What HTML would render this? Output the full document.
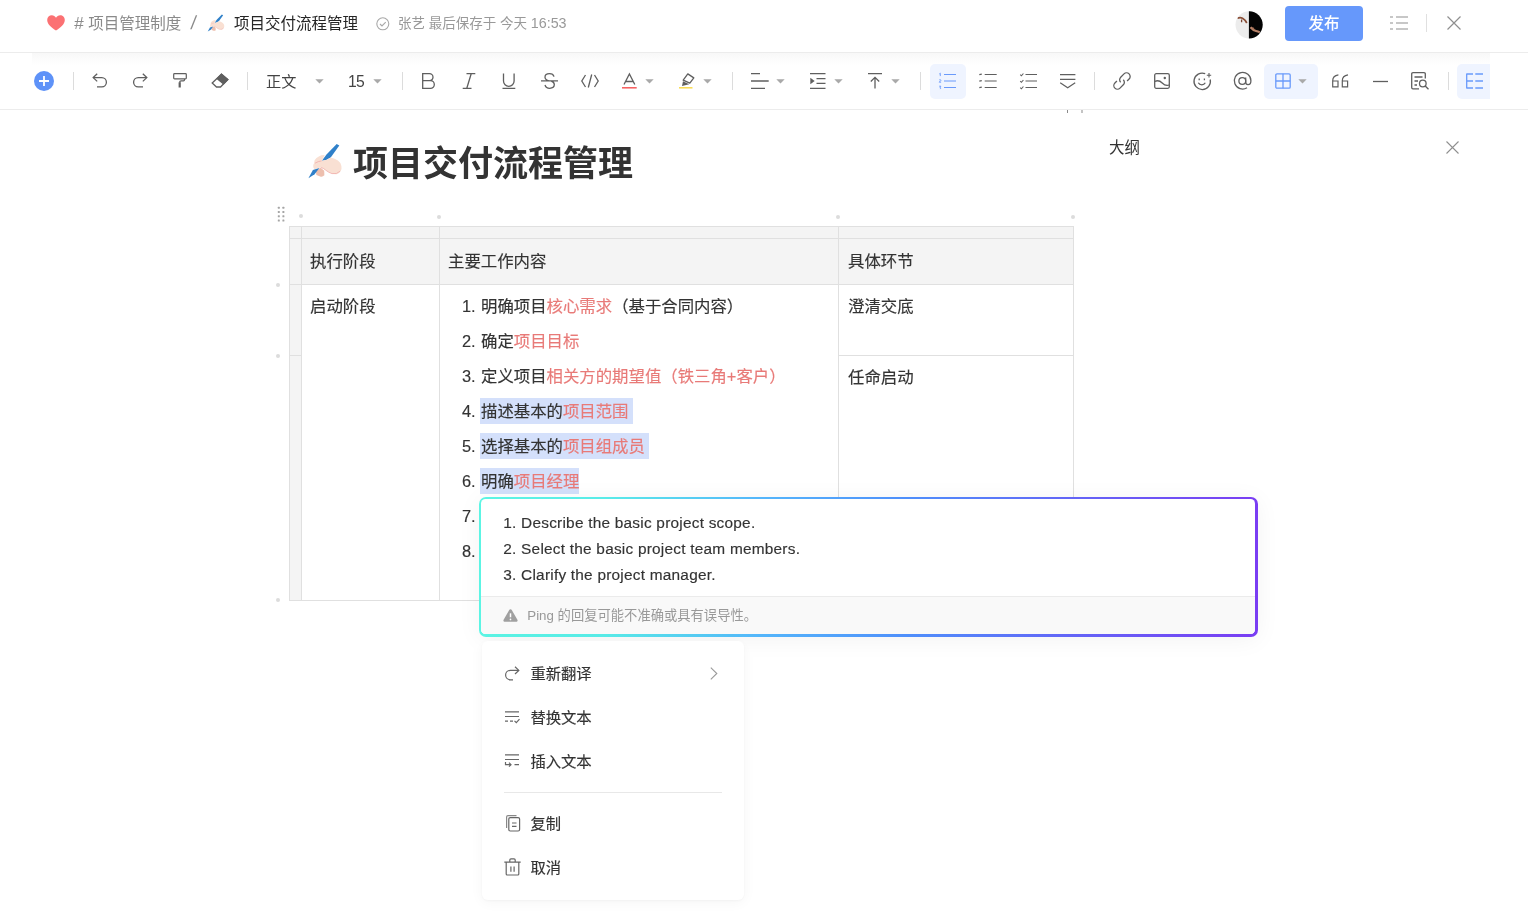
<!DOCTYPE html>
<html lang="zh-CN">
<head>
<meta charset="utf-8">
<title>项目交付流程管理</title>
<style>
*{box-sizing:border-box;margin:0;padding:0}
html,body{width:1528px;height:924px;overflow:hidden;background:#fff}
body{position:relative;font-family:"Liberation Sans","Noto Sans CJK SC",sans-serif;color:#333;-webkit-font-smoothing:antialiased}
.abs{position:absolute}
.t{position:absolute;white-space:nowrap;line-height:1}
svg{position:absolute;overflow:visible}
/* header */
#topline{left:0;top:52px;width:1528px;height:1px;background:#ececec}
#tbshadow{left:32px;top:53px;width:1458px;height:12px;background:linear-gradient(#f8f8f8,#fff)}
#botline{left:0;top:109px;width:1528px;height:1px;background:#ececec}
.sep{position:absolute;width:1px;background:#dcdcdc}
.hl{position:absolute;background:#eff4ff;border-radius:5px}
/* table */
.cellbg{position:absolute;background:#f4f4f4}
.ln{position:absolute;background:#e0e0e0}
.li{-webkit-text-stroke-width:.15px;position:absolute;white-space:nowrap;font-size:16.4px;line-height:24px;height:24px;color:#333}
.red{color:#e87a78}
.sel{background:#d4e0fb;padding:4px 0 4px 0;margin-left:-1px;padding-left:1px}
.dot{position:absolute;width:4px;height:4px;border-radius:50%;background:#dcdcdc}
/* popup */
#pop{left:478.5px;top:496.5px;width:779px;height:140.5px;border-radius:7px;background:linear-gradient(90deg,#5cf5e4 0%,#59ece8 16%,#54b6fb 36%,#4f8ffb 55%,#6365f7 76%,#7a3df3 100%);box-shadow:0 3px 24px rgba(0,0,0,.05)}
#popin{left:2.8px;top:2.8px;right:2.8px;bottom:2.8px;border-radius:4.5px;background:#fff;overflow:hidden}
#popfoot{left:0;right:0;top:96.7px;bottom:0;background:#f9f9f9;border-top:1px solid #ebebeb}
.en{-webkit-text-stroke-width:.15px;position:absolute;font-size:15.4px;letter-spacing:.23px;color:#333;white-space:nowrap;line-height:1}
/* menu */
#menu{left:482px;top:641px;width:262px;height:259px;border-radius:6px;background:#fff;box-shadow:0 2px 14px rgba(0,0,0,.045),0 1px 3px rgba(0,0,0,.04)}
.mi{-webkit-text-stroke-width:.15px;position:absolute;font-size:15.3px;color:#333;white-space:nowrap;line-height:1}
</style>
</head>
<body>
<div id="wrap" style="position:absolute;left:0;top:0;width:1528px;height:924px;will-change:transform">
<!-- TOP BAR -->
<div id="top">
<svg style="left:47px;top:15px" width="18" height="16" viewBox="0 0 18 16"><path d="M9 15.6C4.5 12.6 0.2 9.2 0.2 5 0.2 2.2 2.3 0.3 4.8 0.3 6.6 0.3 8.1 1.2 9 2.8 9.9 1.2 11.4 0.3 13.2 0.3 15.7 0.3 17.8 2.2 17.8 5 17.8 9.2 13.5 12.6 9 15.6Z" fill="#fb7173"/></svg>
<div class="t" style="left:74.2px;top:16px;font-size:15.5px;color:#8a8a8a"><span style="font-size:17px;line-height:0;letter-spacing:.3px">#</span> 项目管理制度</div>
<div class="t" style="left:191px;top:13px;font-size:19px;color:#8a8a8a;transform:skewX(-8deg) scaleX(.95)">/</div>
<svg style="left:207px;top:14px" width="18" height="18" viewBox="0 0 36 36"><path d="M8.800 27.700L13.600 24.700 17.200 27.700 17.400 32.300Q15.500 34.300 13.200 33.500L9.400 31.900Z" fill="#edbfae"/><path d="M29.700 0.900L32.300 2.400 23.700 14.600Q20.500 17.200 14.800 17.800L19.500 11.600Z" fill="#2f80c9"/><path d="M7.600 17.200Q9.200 14.600 11.800 13.400 14.800 11.700 17.800 12L14.800 17.800Q19 18 23.700 14.600 28 15.500 30.900 17.600 34.200 20 34.400 23 34.900 26 33.800 27.700 32 31 29.700 31.300 26.500 31.500 23.700 30.100 20.500 28.500 17.800 26.500 15.500 24.300 13.600 24.400L7.600 26.200Q6 25 6.200 23 6.200 21.500 7 20.600Z" fill="#f9e0d3"/><path d="M5.900 26.900L12.400 25 7.600 31.300 1.400 35.200Z" fill="#2f80c9"/><path d="M8 20.200Q11 18.300 14.600 17.900" fill="none" stroke="#f2b3b0" stroke-width=".9"/><path d="M13.800 24.500Q16.500 25 18.500 27 22 29.800 25 30.600 29.500 31.600 33.200 28.200" fill="none" stroke="#f2b3b0" stroke-width=".9"/></svg>
<div class="t" style="left:234px;top:16px;font-size:15.5px;color:#262626">项目交付流程管理</div>
<svg style="left:376px;top:17px" width="14" height="14" viewBox="0 0 14 14"><circle cx="6.800" cy="6.800" r="6" fill="none" stroke="#a8a8a8" stroke-width="1.100"/><path d="M4 7l2 2 3.700-3.800" fill="none" stroke="#a8a8a8" stroke-width="1.100"/></svg>
<div class="t" style="left:398px;top:17px;font-size:13.500px;color:#999">张艺 最后保存于 今天 <span style="font-size:14.300px;line-height:0">16:53</span></div>
<!-- avatar -->
<svg style="left:1235px;top:11px" width="28" height="28" viewBox="0 0 28 28"><defs><clipPath id="avc"><circle cx="14.100" cy="13.800" r="13.600"/></clipPath></defs><g clip-path="url(#avc)"><rect width="28" height="28" fill="#ececec"/><rect x="13.900" width="15" height="28" fill="#040404"/><path d="M2.500 7.300Q5 6 7.500 7.200 10.200 8.800 11.800 12" stroke="#8a4e36" stroke-width="1.700" fill="none"/><path d="M6.600 8.500v2.800" stroke="#7a4433" stroke-width="1.300"/><path d="M15.500 16.300Q18 19.200 21 20 23 20.600 24.800 21.200" stroke="#b88268" stroke-width="2.200" fill="none"/><path d="M17.500 16.300l1.500 1.800" stroke="#a06a50" stroke-width="1.200"/></g></svg>
<div class="abs" style="left:1285px;top:6px;width:78px;height:35px;border-radius:4px;background:#6698fb"></div>
<div class="t" style="left:1308.500px;top:16px;font-size:15.500px;font-weight:500;color:#fff">发布</div>
<svg style="left:1390px;top:16px" width="18" height="14" viewBox="0 0 18 14" fill="none" stroke="#b5b5b5" stroke-width="1.300"><path d="M0 1h3M6 1h12M0 7h3M6 7h12M0 13h3M6 13h12"/></svg>
<div class="sep" style="left:1426px;top:14px;height:18px;background:#e0e0e0"></div>
<svg style="left:1447px;top:16px" width="14" height="14" viewBox="0 0 14 14" fill="none" stroke="#8f8f8f" stroke-width="1.200"><path d="M0.500 0.500l13 13M13.500 0.500l-13 13"/></svg>
</div>
<div class="abs" id="topline"></div>
<div class="abs" id="tbshadow"></div>
<div class="abs" id="botline"></div>
<!-- TOOLBAR -->
<div id="toolbar">
<svg style="left:34px;top:71px" width="20" height="20" viewBox="0 0 20 20"><circle cx="10" cy="10" r="10" fill="#5e92f8"/><path d="M10 5v10M5 10h10" stroke="#fff" stroke-width="1.800"/></svg>
<div class="sep" style="left:73px;top:72px;height:18px"></div>
<svg style="left:92px;top:73px" width="16" height="15" viewBox="0 0 16 15" fill="none" stroke="#5f5f5f" stroke-width="1.3" ><path d="M5.200 0.800L1.200 4.600l4 3.800"/><path d="M1.500 4.600h8.300a4.600 4.600 0 0 1 0 9.200H5"/></svg>
<svg style="left:132px;top:73px" width="16" height="15" viewBox="0 0 16 15" fill="none" stroke="#5f5f5f" stroke-width="1.3" ><path d="M10.800 0.800l4 3.800-4 3.800"/><path d="M14.500 4.600H6.200a4.600 4.600 0 0 0 0 9.200H11"/></svg>
<svg style="left:173px;top:73px" width="14" height="15" viewBox="0 0 14 15" fill="none" stroke="#5f5f5f" stroke-width="1.3" ><rect x="0.700" y="0.700" width="12.600" height="5.200" rx="0.800" stroke-width="1.200"/><path d="M11.500 6v.8q0 1-1 1H8q-1.200 0-1.200 1.200v.8" stroke-width="1.200"/><path d="M6.700 9.300v5.200" stroke-width="2.200"/></svg>
<svg style="left:211px;top:73px" width="18" height="16" viewBox="0 0 18 16" fill="none" stroke="#5f5f5f" stroke-width="1.3" ><path d="M10.500 1.200l6.300 5.300-7.300 7.500H5.500L1.200 10z"/><path d="M10.500 1.200l6.300 5.300-4.300 4.400-6.300-5.300z" fill="#5f5f5f"/></svg>
<div class="sep" style="left:247px;top:72px;height:18px"></div>
<div class="t" style="left:266px;top:74.300px;font-size:15.200px;color:#444">正文</div>
<svg style="left:315px;top:79px" width="9" height="5" viewBox="0 0 9 5"><path d="M0.300 0.300h8.400L4.500 4.600z" fill="#a9a9a9"/></svg>
<div class="t" style="left:348px;top:73.800px;font-size:15.700px;color:#444;letter-spacing:-0.700px">15</div>
<svg style="left:373px;top:79px" width="9" height="5" viewBox="0 0 9 5"><path d="M0.300 0.300h8.400L4.500 4.600z" fill="#a9a9a9"/></svg>
<div class="sep" style="left:402px;top:72px;height:18px"></div>
<svg style="left:422px;top:73px" width="14" height="16" viewBox="0 0 14 16" fill="none" stroke="#5f5f5f" stroke-width="1.3" ><path d="M0.700 0.700h6.800a3.500 3.500 0 0 1 0 7H0.700zM0.700 7.700h7.800a3.800 3.800 0 0 1 0 7.600H0.700z"/></svg>
<svg style="left:462px;top:73px" width="14" height="16" viewBox="0 0 14 16" fill="none" stroke="#5f5f5f" stroke-width="1.3" ><path d="M4.500 0.700h8.800M0.700 15.300h8.800M9.200 0.700L4.800 15.300"/></svg>
<svg style="left:502px;top:73px" width="14" height="16" viewBox="0 0 14 16" fill="none" stroke="#5f5f5f" stroke-width="1.3" ><path d="M1.500 0.500v7.500a5.300 5.300 0 0 0 10.600 0V0.500M0.500 15.300h12.800"/></svg>
<svg style="left:541px;top:73px" width="17" height="16" viewBox="0 0 17 16" fill="none" stroke="#5f5f5f" stroke-width="1.3" ><path d="M13 3.600C12.500 1.800 10.800 0.700 8.500 0.700 6 0.700 4 2 4 4.200c0 1.800 1.300 2.800 4 3.600M4 12c.6 2 2.300 3.300 4.700 3.300 2.600 0 4.600-1.400 4.600-3.700 0-1.700-1-2.700-3-3.400M0 7.900h17"/></svg>
<svg style="left:581px;top:74px" width="18" height="14" viewBox="0 0 18 14" fill="none" stroke="#5f5f5f" stroke-width="1.3" ><path d="M4.500 1L0.800 7l3.700 6M13.500 1l3.700 6-3.700 6M10.700 0.500L7.300 13.500"/></svg>
<svg style="left:622px;top:73px" width="15" height="16" viewBox="0 0 15 16" fill="none" stroke="#5f5f5f" stroke-width="1.300"><path d="M2 11.500L7.400 0.900l5.400 10.600M3.600 8.500h7.600"/><path d="M0 14.800h14.700" stroke="#f65a5a" stroke-width="1.500"/></svg>
<svg style="left:645px;top:79px" width="9" height="5" viewBox="0 0 9 5"><path d="M0.300 0.300h8.400L4.500 4.600z" fill="#a9a9a9"/></svg>
<svg style="left:679px;top:73px" width="15" height="16" viewBox="0 0 15 16" fill="none" stroke="#5f5f5f" stroke-width="1.300"><path d="M8.800 0.900l6 4-4 5.300-6.600-3z" stroke-linejoin="round"/><path d="M4 8.300l6.300 3-7.300 1.600z" fill="#5f5f5f" stroke="none"/><path d="M0 14.800h13.500" stroke="#f9db4e" stroke-width="1.500"/></svg>
<svg style="left:703px;top:79px" width="9" height="5" viewBox="0 0 9 5"><path d="M0.300 0.300h8.400L4.500 4.600z" fill="#a9a9a9"/></svg>
<div class="sep" style="left:732px;top:72px;height:18px"></div>
<svg style="left:751px;top:73px" width="18" height="16" viewBox="0 0 18 16" fill="none" stroke="#5f5f5f" stroke-width="1.3" ><path d="M0 0.700h9M0 8h17.700M0 15.300h14"/></svg>
<svg style="left:776px;top:79px" width="9" height="5" viewBox="0 0 9 5"><path d="M0.300 0.300h8.400L4.500 4.600z" fill="#a9a9a9"/></svg>
<svg style="left:810px;top:73px" width="16" height="16" viewBox="0 0 16 16" fill="none" stroke="#5f5f5f" stroke-width="1.3" ><path d="M0 0.700h15.500M6.500 5.600h9M6.500 10.400h9M0 15.300h15.500"/><path d="M0.300 4.800L4.700 8 0.300 11.200z" fill="#5f5f5f" stroke="none"/></svg>
<svg style="left:834px;top:79px" width="9" height="5" viewBox="0 0 9 5"><path d="M0.300 0.300h8.400L4.500 4.600z" fill="#a9a9a9"/></svg>
<svg style="left:868px;top:73px" width="14" height="16" viewBox="0 0 14 16" fill="none" stroke="#5f5f5f" stroke-width="1.3" ><path d="M0 0.700h14M7 15.500V4.500M2.800 8.500L7 4.300l4.200 4.200"/></svg>
<svg style="left:891px;top:79px" width="9" height="5" viewBox="0 0 9 5"><path d="M0.300 0.300h8.400L4.500 4.600z" fill="#a9a9a9"/></svg>
<div class="sep" style="left:920px;top:72px;height:18px"></div>
<div class="hl" style="left:930px;top:64px;width:36px;height:35px"></div>
<svg style="left:938px;top:73px" width="18" height="16" viewBox="0 0 18 16" fill="none" stroke="#6a9afb" stroke-width="1.200"><path d="M6 1.500h12M6 8h12M6 14.500h12"/><path d="M1.300 1l1-.8v2.900M1.200 7c.6-.6 1.800-.4 1.700.4L1.200 9.200h1.900M1.200 13.200h1.700l-1 1.200c1-.1 1.300 1.300 0 1.400" stroke-width=".9"/></svg>
<svg style="left:979px;top:73px" width="18" height="16" viewBox="0 0 18 16" fill="none" stroke="#5f5f5f" stroke-width="1.200"><path d="M0.300 1.700l2.500-.5M5.700 1.500h12M0.300 8.200l2.500-.5M5.700 8h12M0.300 14.700l2.500-.5M5.700 14.500h12"/></svg>
<svg style="left:1020px;top:73px" width="18" height="16" viewBox="0 0 18 16" fill="none" stroke="#5f5f5f" stroke-width="1.200"><path d="M5.500 1.500h11.500M5.500 8h11.500M5.500 14.500h11.500"/><path d="M0.200 1.700l1.200 1.100 2-2.300M0.200 8.200l1.200 1.100 2-2.300M0.200 14.700l1.200 1.100 2-2.300" stroke-width="1.100"/></svg>
<svg style="left:1059px;top:73px" width="18" height="16" viewBox="0 0 18 16" fill="none" stroke="#5f5f5f" stroke-width="1.200"><path d="M1 1.700h15.400M1 6.400h15.400M1.200 9.700l7.500 5 7.500-5"/></svg>
<div class="sep" style="left:1094px;top:72px;height:18px"></div>
<svg style="left:1113px;top:72px" width="18" height="18" viewBox="0 0 18 18" fill="none" stroke="#5f5f5f" stroke-width="1.3" ><path d="M7.700 10.300a3.600 3.600 0 0 1 0-5.100l3.300-3.300a3.600 3.600 0 0 1 5.100 5.100l-2 2"/><path d="M10.300 7.700a3.600 3.600 0 0 1 0 5.100l-3.300 3.300a3.600 3.600 0 0 1-5.100-5.100l2-2"/></svg>
<svg style="left:1154px;top:73px" width="16" height="16" viewBox="0 0 16 16" fill="none" stroke="#5f5f5f" stroke-width="1.3" ><rect x="0.700" y="0.700" width="14.600" height="14.600" rx="1.500"/><path d="M0.700 8.500c3-1.500 5.500-.5 7.500 1.500s4.500 3 7 2"/><circle cx="10.800" cy="5" r="1.200" fill="#5f5f5f" stroke="none"/></svg>
<svg style="left:1193px;top:72px" width="19" height="18" viewBox="0 0 19 18" fill="none" stroke="#5f5f5f" stroke-width="1.300"><path d="M12.200 1.700A8.200 8.200 0 1 0 17.200 7.500"/><path d="M5.300 10.800a4 4 0 0 0 7 0M6.200 6.500v1.800M11.400 6.500v1.800"/><path d="M16 1v4.400M13.800 3.200h4.400" stroke-width="1.100"/></svg>
<svg style="left:1233px;top:72px" width="19" height="18" viewBox="0 0 19 18" fill="none" stroke="#5f5f5f" stroke-width="1.3" ><circle cx="9.300" cy="9" r="3.400"/><path d="M12.700 5.500V10c0 1.800 1 2.600 2.300 2.600 1.700 0 2.900-1.600 2.900-3.900A8.300 8.300 0 1 0 14 15.800"/></svg>
<div class="hl" style="left:1264px;top:64px;width:54px;height:35px"></div>
<svg style="left:1274.500px;top:73px" width="16" height="16" viewBox="0 0 16 16" fill="none" stroke="#6a9afb" stroke-width="1.300"><rect x="0.800" y="0.800" width="14.400" height="14.400" rx="1.200"/><path d="M8 0.800v14.400M0.800 8h14.400"/></svg>
<svg style="left:1298px;top:79px" width="9" height="5" viewBox="0 0 9 5"><path d="M0.300 0.300h8.400L4.500 4.600z" fill="#a9a9a9"/></svg>
<svg style="left:1332px;top:74px" width="17" height="14" viewBox="0 0 17 14" fill="none" stroke="#5f5f5f" stroke-width="1.200"><path d="M6.400 0.800C3 1.300 0.700 3.300 0.700 6.800V12.800H6V7H0.700"/><path d="M16 0.800C12.600 1.300 10.300 3.300 10.300 6.800V12.800H15.600V7H10.300"/></svg>
<svg style="left:1373px;top:80px" width="15" height="3" viewBox="0 0 15 3" fill="none" stroke="#5f5f5f" stroke-width="1.3" ><path d="M0 1.500h15"/></svg>
<svg style="left:1411px;top:72px" width="19" height="18" viewBox="0 0 19 18" fill="none" stroke="#5f5f5f" stroke-width="1.3" ><path d="M14.300 6.500V2c0-.8-.5-1.300-1.300-1.300H2C1.200 0.700 0.700 1.200 0.700 2v13.500c0 .8.500 1.300 1.300 1.300h6"/><path d="M3.500 5h8M3.500 9h3.500M3.500 13h2.500"/><circle cx="11.800" cy="11.500" r="3.300"/><path d="M14.200 14l3.300 3.300"/></svg>
<div class="sep" style="left:1448px;top:72px;height:18px"></div>
<div class="abs" style="left:1457px;top:64px;width:33px;height:35px;overflow:hidden"><div class="hl" style="left:0;top:0;width:40px;height:35px"></div></div>
<svg style="left:1466px;top:73px" width="17" height="16" viewBox="0 0 17 16" fill="none" stroke="#6a9afb" stroke-width="1.300"><path d="M0.700 0.400v15.200M0.700 1h6.300M0.700 8h6.300M0.700 15h6.300M9.300 1h7.700M9.300 8h7.700M9.300 15h7.700"/></svg>
<div class="abs" style="left:1067px;top:110px;width:1px;height:3px;background:#8a8a8a"></div><div class="abs" style="left:1081px;top:110px;width:2px;height:3px;background:#c4c4c4"></div>
</div>
<!-- DOC -->
<div id="doc">
<svg style="left:307px;top:143px" width="36" height="36" viewBox="0 0 36 36"><path d="M8.800 27.700L13.600 24.700 17.200 27.700 17.400 32.300Q15.500 34.300 13.200 33.500L9.400 31.900Z" fill="#edbfae"/><path d="M29.700 0.900L32.300 2.400 23.700 14.600Q20.500 17.200 14.800 17.800L19.500 11.600Z" fill="#2f80c9"/><path d="M7.600 17.200Q9.200 14.600 11.800 13.400 14.800 11.700 17.800 12L14.800 17.800Q19 18 23.700 14.600 28 15.500 30.900 17.600 34.200 20 34.400 23 34.900 26 33.800 27.700 32 31 29.700 31.300 26.500 31.500 23.700 30.100 20.500 28.500 17.800 26.500 15.500 24.300 13.600 24.400L7.600 26.200Q6 25 6.200 23 6.200 21.500 7 20.600Z" fill="#f9e0d3"/><path d="M5.900 26.900L12.400 25 7.600 31.300 1.400 35.200Z" fill="#2f80c9"/><path d="M8 20.200Q11 18.300 14.600 17.900" fill="none" stroke="#f2b3b0" stroke-width=".9"/><path d="M13.800 24.500Q16.500 25 18.500 27 22 29.800 25 30.600 29.500 31.600 33.200 28.200" fill="none" stroke="#f2b3b0" stroke-width=".9"/></svg>
<div class="t" style="left:353px;top:146px;font-size:35px;font-weight:700;color:#333;letter-spacing:0">项目交付流程管理</div>
<svg style="left:277px;top:206px" width="9" height="16" viewBox="0 0 9 16" fill="#a5a5a5" stroke="none"><rect x="0.8" y="0.7" width="2" height="2" rx=".5"/><rect x="0.8" y="5" width="2" height="2" rx=".5"/><rect x="0.8" y="9.2" width="2" height="2" rx=".5"/><rect x="0.8" y="13.5" width="2" height="2" rx=".5"/><rect x="5.4" y="0.7" width="2" height="2" rx=".5"/><rect x="5.4" y="5" width="2" height="2" rx=".5"/><rect x="5.4" y="9.2" width="2" height="2" rx=".5"/><rect x="5.4" y="13.5" width="2" height="2" rx=".5"/></svg>
<div class="dot" style="left:299px;top:214px"></div>
<div class="dot" style="left:437px;top:215px"></div>
<div class="dot" style="left:836px;top:215px"></div>
<div class="dot" style="left:1071px;top:215px"></div>
<div class="dot" style="left:276px;top:283px"></div>
<div class="dot" style="left:276px;top:354px"></div>
<div class="dot" style="left:276px;top:598px"></div>
<div class="cellbg" style="left:289px;top:226px;width:785px;height:59px"></div>
<div class="cellbg" style="left:289px;top:226px;width:13px;height:375px"></div>
<div class="ln" style="left:289px;top:226px;width:785px;height:1px;background:#e0e0e0"></div>
<div class="ln" style="left:289px;top:238px;width:785px;height:1px;background:#e0e0e0"></div>
<div class="ln" style="left:289px;top:284px;width:785px;height:1px;background:#e0e0e0"></div>
<div class="ln" style="left:289px;top:355px;width:13px;height:1px;background:#e0e0e0"></div>
<div class="ln" style="left:838px;top:355px;width:236px;height:1px;background:#e0e0e0"></div>
<div class="ln" style="left:289px;top:600px;width:192px;height:1px;background:#e0e0e0"></div>
<div class="ln" style="left:289px;top:226px;width:1px;height:375px;background:#e0e0e0"></div>
<div class="ln" style="left:301px;top:226px;width:1px;height:375px;background:#e0e0e0"></div>
<div class="ln" style="left:439px;top:226px;width:1px;height:375px;background:#e0e0e0"></div>
<div class="ln" style="left:838px;top:226px;width:1px;height:272px;background:#e0e0e0"></div>
<div class="ln" style="left:1073px;top:226px;width:1px;height:272px;background:#e0e0e0"></div>
<div class="li" style="left:310px;top:249px">执行阶段</div>
<div class="li" style="left:448px;top:249px">主要工作内容</div>
<div class="li" style="left:848px;top:249px">具体环节</div>
<div class="li" style="left:310px;top:294px">启动阶段</div>
<div class="li" style="left:848px;top:294px">澄清交底</div>
<div class="li" style="left:848px;top:365px">任命启动</div>
<div class="li" style="left:462px;top:294px">1.</div>
<div class="li" style="left:481px;top:294px">明确项目<span class="red">核心需求</span>（基于合同内容）</div>
<div class="li" style="left:462px;top:329px">2.</div>
<div class="li" style="left:481px;top:329px">确定<span class="red">项目目标</span></div>
<div class="li" style="left:462px;top:364px">3.</div>
<div class="li" style="left:481px;top:364px">定义项目<span class="red">相关方的期望值（铁三角+客户）</span></div>
<div class="li" style="left:462px;top:399px">4.</div>
<div class="li" style="left:481px;top:399px"><span class="sel">描述基本的<span class="red">项目范围</span>&nbsp;</span></div>
<div class="li" style="left:462px;top:434px">5.</div>
<div class="li" style="left:481px;top:434px"><span class="sel">选择基本的<span class="red">项目组成员</span>&nbsp;</span></div>
<div class="li" style="left:462px;top:469px">6.</div>
<div class="li" style="left:481px;top:469px"><span class="sel">明确<span class="red">项目经理</span></span></div>
<div class="li" style="left:462px;top:504px">7.</div>
<div class="li" style="left:462px;top:539px">8.</div>
<div class="t" style="left:1109px;top:140px;font-size:15.500px;color:#333">大纲</div>
<svg style="left:1446px;top:141px" width="13" height="13" viewBox="0 0 13 13" fill="none" stroke="#8f8f8f" stroke-width="1.100"><path d="M0.500 0.500l12 12M12.500 0.500l-12 12"/></svg>
</div>
<!-- POPUP -->
<div class="abs" id="pop"><div class="abs" id="popin">
<div class="en" style="left:22px;top:16px">1. Describe the basic project scope.</div>
<div class="en" style="left:22px;top:41.300px">2. Select the basic project team members.</div>
<div class="en" style="left:22px;top:68px">3. Clarify the project manager.</div>
<div class="abs" id="popfoot">
<svg style="left:22px;top:12px" width="15" height="13" viewBox="0 0 15 13"><path d="M7.500 0.300c.6 0 1.100.300 1.400.900l5.500 9.500c.6 1-.1 2.100-1.300 2.100H1.900c-1.200 0-1.900-1.100-1.300-2.100L6.100 1.200c.3-.6.800-.9 1.400-.9z" fill="#a0a0a0"/><path d="M7.500 4.300v4" stroke="#fff" stroke-width="1.500"/><circle cx="7.500" cy="10.400" r=".85" fill="#fff"/></svg>
<div class="t" style="left:46px;top:12.5px;font-size:13.3px;color:#999">Ping 的回复可能不准确或具有误导性。</div>
</div>
</div></div>
<!-- MENU -->
<div class="abs" id="menu">
<svg style="left:22px;top:25px" width="16" height="15" viewBox="0 0 16 15" fill="none" stroke="#666" stroke-width="1.200"><path d="M11 0.800l3.800 3.600-3.800 3.600"/><path d="M14.500 4.400H6.300a4.700 4.700 0 0 0 0 9.400H9"/></svg>
<div class="mi" style="left:48.400px;top:25px">重新翻译</div>
<svg style="left:228px;top:26px" width="8" height="13" viewBox="0 0 8 13" fill="none" stroke="#999" stroke-width="1.100"><path d="M0.800 0.600l6 5.900-6 5.900"/></svg>
<svg style="left:23px;top:70px" width="15" height="13" viewBox="0 0 15 13" fill="none" stroke="#666" stroke-width="1.200"><path d="M0 0.800h14M0 5.500h14M0 10.200h3M5 10.200h3M9.500 9.800l1.800 1.800 3.200-3.400"/></svg>
<div class="mi" style="left:48.400px;top:69px">替换文本</div>
<svg style="left:23px;top:113px" width="15" height="14" viewBox="0 0 15 14" fill="none" stroke="#666" stroke-width="1.200"><path d="M0 0.800h14M0 5.500h14M9.500 10.700h4.500M0.500 8v2.700h5M4 8.700l2 2-2 2" /></svg>
<div class="mi" style="left:48.400px;top:113px">插入文本</div>
<div class="abs" style="left:22px;top:151px;width:218px;height:1px;background:#e8e8e8"></div>
<svg style="left:24px;top:174px" width="15" height="17" viewBox="0 0 15 17" fill="none" stroke="#666" stroke-width="1.200"><rect x="2.800" y="2.600" width="10.800" height="13.400" rx="1.500"/><path d="M0.600 13V2c0-.8.600-1.400 1.400-1.400H10.500" stroke="#888"/><path d="M6 8h4.500M6 11.300h4.500"/></svg>
<div class="mi" style="left:48.400px;top:175px">复制</div>
<svg style="left:22px;top:217px" width="17" height="18" viewBox="0 0 17 18" fill="none" stroke="#666" stroke-width="1.200"><path d="M0.300 4.200h16.400M5.800 4.200V2c0-.7.500-1.200 1.200-1.200h3c.7 0 1.200.5 1.200 1.200v2.200M2.200 4.200v11.800c0 .6.400 1 1 1h10.600c.6 0 1-.4 1-1V4.200M6.900 8.500v5.300M10.100 8.500v5.300"/></svg>
<div class="mi" style="left:48.400px;top:219px">取消</div>
</div>
</div>
</body>
</html>
